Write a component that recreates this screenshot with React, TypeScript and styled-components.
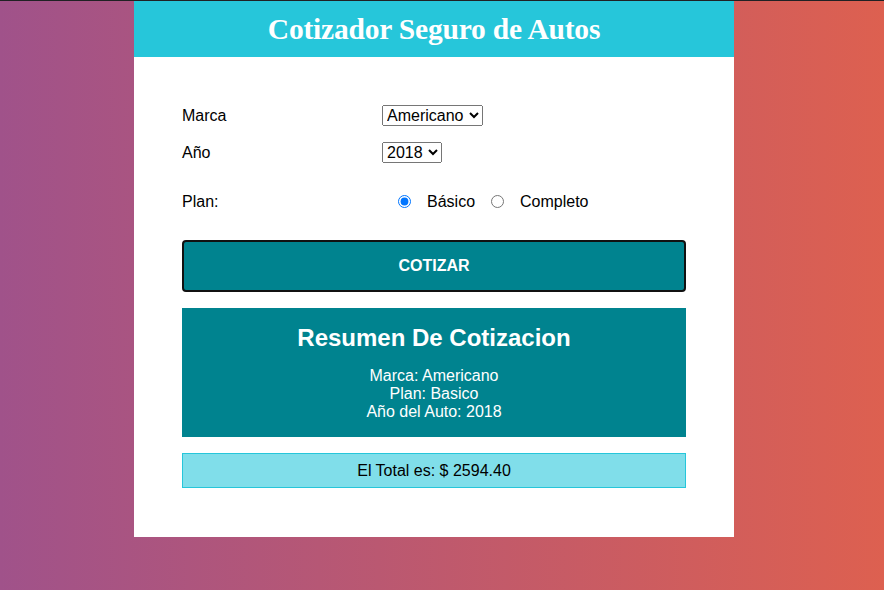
import React from "react";
import styled, { createGlobalStyle } from "styled-components";

const Global = createGlobalStyle`
  html, body { margin: 0; padding: 0; }
  body { font-family: "Liberation Sans", Arial, sans-serif; font-size: 16px; color: #000; }
  * { box-sizing: border-box; }
`;

const Page = styled.div`
  min-height: 590px;
  padding-right: 16px;
  border-top: 1px solid #202124;
  background: linear-gradient(to right, #a0528a, #dd6050);
`;

const Contenedor = styled.div`
  width: 600px;
  margin: 0 auto;
  background: #fff;
`;

const Header = styled.header`
  background-color: #26c6da;
  height: 56px;
  display: flex;
  align-items: center;
  justify-content: center;
`;

const Titulo = styled.h1`
  margin: 0;
  color: #fff;
  font-family: "Liberation Serif", "Times New Roman", serif;
  font-weight: bold;
  font-size: 29.5px;
  letter-spacing: -0.2px;
`;

const Formulario = styled.form`
  padding: 48px 48px 49px;
`;

const Campo = styled.div<{ $mb?: number }>`
  display: flex;
  align-items: center;
  height: 21px;
  margin-bottom: ${(p) => p.$mb ?? 16}px;
`;

const Label = styled.label`
  flex: 0 0 200px;
`;

const Select = styled.select`
  font-family: "Liberation Sans", Arial, sans-serif;
  font-size: 16px;
  padding-right: 2px;
`;

const Radio = styled.input`
  margin: 0 16px;
`;

const Boton = styled.button`
  display: block;
  width: 100%;
  height: 52px;
  background-color: #00838f;
  color: #fff;
  font-family: "Liberation Sans", Arial, sans-serif;
  font-size: 16px;
  font-weight: bold;
  text-transform: uppercase;
  border: 2px solid #111;
  border-radius: 4px;
`;

const Resumen = styled.div`
  margin-top: 16px;
  padding: 16px;
  text-align: center;
  background-color: #00838f;
  color: #fff;
`;

const ResumenTitulo = styled.h2`
  margin: 0 0 15px;
  font-size: 24px;
  font-weight: bold;
`;

const Lista = styled.ul`
  list-style: none;
  margin: 0;
  padding: 0;
  line-height: 18px;
`;

const Total = styled.div`
  margin-top: 16px;
  padding: 8px;
  text-align: center;
  background-color: #80deea;
  border: 1px solid #26c6da;
  line-height: 17px;
`;

export default function App() {
  return (
    <>
      <Global />
      <Page>
        <Contenedor>
          <Header>
            <Titulo>Cotizador Seguro de Autos</Titulo>
          </Header>
          <Formulario onSubmit={(e) => e.preventDefault()}>
            <Campo>
              <Label>Marca</Label>
              <Select defaultValue="americano">
                <option value="americano">Americano</option>
                <option value="europeo">Europeo</option>
                <option value="asiatico">Asiatico</option>
              </Select>
            </Campo>
            <Campo $mb={28}>
              <Label>Año</Label>
              <Select defaultValue="2018">
                <option value="2021">2021</option>
                <option value="2020">2020</option>
                <option value="2019">2019</option>
                <option value="2018">2018</option>
                <option value="2017">2017</option>
              </Select>
            </Campo>
            <Campo $mb={28}>
              <Label>Plan:</Label>
              <Radio type="radio" name="plan" value="basico" defaultChecked />
              Básico
              <Radio type="radio" name="plan" value="completo" />
              Completo
            </Campo>
            <Boton type="submit">Cotizar</Boton>
            <Resumen>
              <ResumenTitulo>Resumen De Cotizacion</ResumenTitulo>
              <Lista>
                <li>Marca: Americano</li>
                <li>Plan: Basico</li>
                <li>Año del Auto: 2018</li>
              </Lista>
            </Resumen>
            <Total>El Total es: $ 2594.40</Total>
          </Formulario>
        </Contenedor>
      </Page>
    </>
  );
}
